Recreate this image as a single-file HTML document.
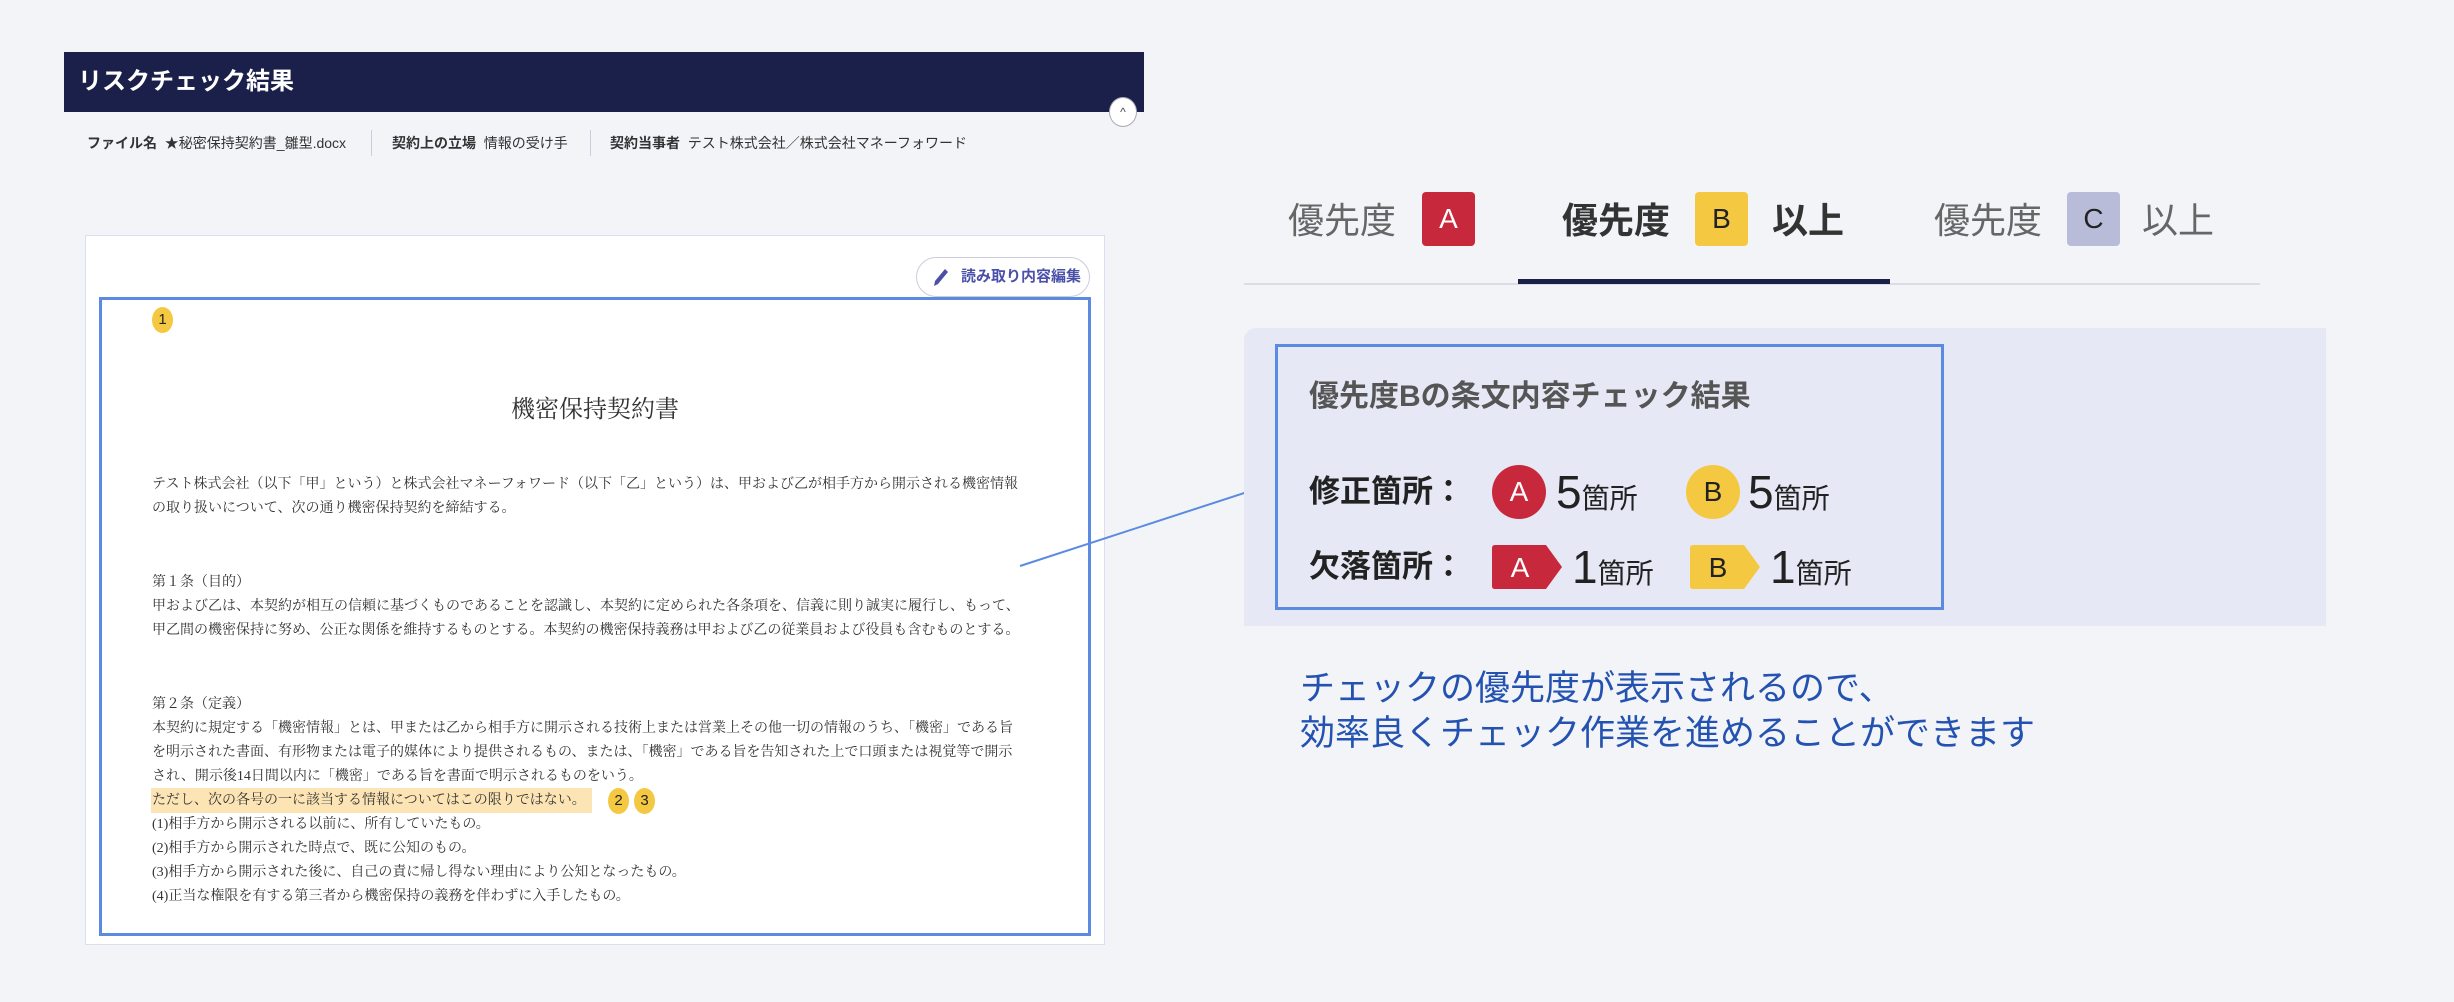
<!DOCTYPE html>
<html><head><meta charset="utf-8"><style>
*{margin:0;padding:0;box-sizing:border-box}
body{width:2454px;height:1002px;background:#f3f4f8;position:relative;overflow:hidden;font-family:"Liberation Sans","Noto Sans CJK JP",sans-serif;color:#333}
.a{position:absolute;white-space:nowrap}
.doc{font-family:"Liberation Serif","Noto Serif CJK SC",serif;font-size:14px;color:#333;line-height:24px}
.yb{position:absolute;width:21px;height:26px;border-radius:50%;background:#f5c842;font-size:15px;text-align:center;line-height:26px;color:#222}
.badge{position:absolute;width:53px;height:54px;border-radius:4px;font-size:28px;text-align:center;line-height:54px;color:#fff}
.tab{position:absolute;top:196px;font-size:36px;line-height:50px;color:#666}
</style></head><body>
<div class="a" style="left:64px;top:52px;width:1080px;height:60px;background:#1b204a"></div>
<div class="a" style="left:78px;top:62px;font-size:24px;font-weight:bold;color:#fff;line-height:40px">リスクチェック結果</div>
<div class="a" style="left:1109px;top:97px;width:28px;height:30px;border-radius:50%;background:#fff;border:1px solid #aab;text-align:center;font-size:12px;line-height:28px;color:#444">^</div>
<div class="a" style="left:87px;top:132px;font-size:14px;line-height:22px;color:#333"><b>ファイル名</b>&nbsp; ★秘密保持契約書_雛型.docx</div>
<div class="a" style="left:371px;top:130px;width:1px;height:26px;background:#ccd"></div>
<div class="a" style="left:392px;top:132px;font-size:14px;line-height:22px"><b>契約上の立場</b>&nbsp; 情報の受け手</div>
<div class="a" style="left:590px;top:130px;width:1px;height:26px;background:#ccd"></div>
<div class="a" style="left:610px;top:132px;font-size:14px;line-height:22px"><b>契約当事者</b>&nbsp; テスト株式会社／株式会社マネーフォワード</div>
<div class="a" style="left:85px;top:235px;width:1020px;height:710px;background:#fff;border:1px solid #dde"></div>
<div class="a" style="left:916px;top:257px;width:174px;height:40px;border:1px solid #ccd;border-radius:20px;background:#fff;font-size:15px;font-weight:bold;color:#4a4fa8;line-height:38px;padding-left:44px">読み取り内容編集</div>
<svg class="a" style="left:930px;top:266px" width="20" height="22" viewBox="0 0 20 22"><path d="M4 20 L5 15 L15 3 L18 6 L8 18 Z" fill="#4a4fa8"/></svg>
<div class="a" style="left:99px;top:297px;width:992px;height:639px;border:3px solid #5b8be0"></div>
<div class="yb" style="left:152px;top:307px">1</div>
<div class="a" style="left:0;top:389px;width:1190px;text-align:center;font-family:'Liberation Serif','Noto Serif CJK SC',serif;font-size:24px;color:#333">機密保持契約書</div>
<div class="a doc" style="left:152px;top:473px">テスト株式会社（以下「甲」という）と株式会社マネーフォワード（以下「乙」という）は、甲および乙が相手方から開示される機密情報<br>の取り扱いについて、次の通り機密保持契約を締結する。</div>
<div class="a doc" style="left:152px;top:571px">第１条（目的）<br>甲および乙は、本契約が相互の信頼に基づくものであることを認識し、本契約に定められた各条項を、信義に則り誠実に履行し、もって、<br>甲乙間の機密保持に努め、公正な関係を維持するものとする。本契約の機密保持義務は甲および乙の従業員および役員も含むものとする。</div>
<div class="a" style="left:151px;top:788px;width:441px;height:25px;background:#fce4b4"></div>
<div class="a doc" style="left:152px;top:693px">第２条（定義）<br>本契約に規定する「機密情報」とは、甲または乙から相手方に開示される技術上または営業上その他一切の情報のうち、「機密」である旨<br>を明示された書面、有形物または電子的媒体により提供されるもの、または、「機密」である旨を告知された上で口頭または視覚等で開示<br>され、開示後14日間以内に「機密」である旨を書面で明示されるものをいう。<br>ただし、次の各号の一に該当する情報についてはこの限りではない。<br>(1)相手方から開示される以前に、所有していたもの。<br>(2)相手方から開示された時点で、既に公知のもの。<br>(3)相手方から開示された後に、自己の責に帰し得ない理由により公知となったもの。<br>(4)正当な権限を有する第三者から機密保持の義務を伴わずに入手したもの。</div>
<div class="yb" style="left:608px;top:788px">2</div>
<div class="yb" style="left:634px;top:788px">3</div>
<svg class="a" style="left:0;top:0" width="2454" height="1002"><line x1="1020" y1="566" x2="1278" y2="482" stroke="#5b8be0" stroke-width="2"/></svg>
<div class="tab" style="left:1288px">優先度</div>
<div class="badge" style="left:1422px;top:192px;background:#c8283c">A</div>
<div class="tab" style="left:1562px;font-weight:bold;color:#333">優先度</div>
<div class="badge" style="left:1695px;top:192px;background:#f5c842;color:#222">B</div>
<div class="tab" style="left:1772px;font-weight:bold;color:#333">以上</div>
<div class="tab" style="left:1934px">優先度</div>
<div class="badge" style="left:2067px;top:192px;background:#b8bcd8;color:#222">C</div>
<div class="tab" style="left:2142px">以上</div>
<div class="a" style="left:1244px;top:283px;width:1016px;height:2px;background:#dcdde3"></div>
<div class="a" style="left:1518px;top:279px;width:372px;height:5px;background:#1b204a"></div>
<div class="a" style="left:1244px;top:328px;width:1082px;height:298px;background:#e6e9f5;border-radius:12px 0 0 0"></div>
<div class="a" style="left:1275px;top:344px;width:669px;height:266px;border:3px solid #5b8be0"></div>
<div class="a" style="left:1309px;top:376px;font-size:30px;font-weight:bold;color:#555;line-height:42px">優先度Bの条文内容チェック結果</div>
<div class="a" style="left:1309px;top:470px;font-size:31px;font-weight:bold;color:#222;line-height:44px">修正箇所：</div>
<div class="a" style="left:1492px;top:465px;width:54px;height:54px;border-radius:50%;background:#c8283c;color:#fff;font-size:28px;text-align:center;line-height:54px">A</div>
<div class="a" style="left:1556px;top:462px;font-size:46px;color:#222;line-height:60px">5<span style="font-size:28px">箇所</span></div>
<div class="a" style="left:1686px;top:465px;width:54px;height:54px;border-radius:50%;background:#f5c842;color:#222;font-size:28px;text-align:center;line-height:54px">B</div>
<div class="a" style="left:1748px;top:462px;font-size:46px;color:#222;line-height:60px">5<span style="font-size:28px">箇所</span></div>
<div class="a" style="left:1309px;top:545px;font-size:31px;font-weight:bold;color:#222;line-height:44px">欠落箇所：</div>
<svg class="a" style="left:1492px;top:545px" width="72" height="44"><path d="M3 0H54L70 22L54 44H3Q0 44 0 41V3Q0 0 3 0Z" fill="#c8283c"/><text x="28" y="32" font-size="28" fill="#fff" text-anchor="middle" font-family="Liberation Sans">A</text></svg>
<div class="a" style="left:1572px;top:537px;font-size:46px;color:#222;line-height:60px">1<span style="font-size:28px">箇所</span></div>
<svg class="a" style="left:1690px;top:545px" width="72" height="44"><path d="M3 0H54L70 22L54 44H3Q0 44 0 41V3Q0 0 3 0Z" fill="#f5c842"/><text x="28" y="32" font-size="28" fill="#222" text-anchor="middle" font-family="Liberation Sans">B</text></svg>
<div class="a" style="left:1770px;top:537px;font-size:46px;color:#222;line-height:60px">1<span style="font-size:28px">箇所</span></div>
<div class="a" style="left:1300px;top:666px;font-size:35px;color:#2352b0;line-height:45px">チェックの優先度が表示されるので、<br>効率良くチェック作業を進めることができます</div>
</body></html>
